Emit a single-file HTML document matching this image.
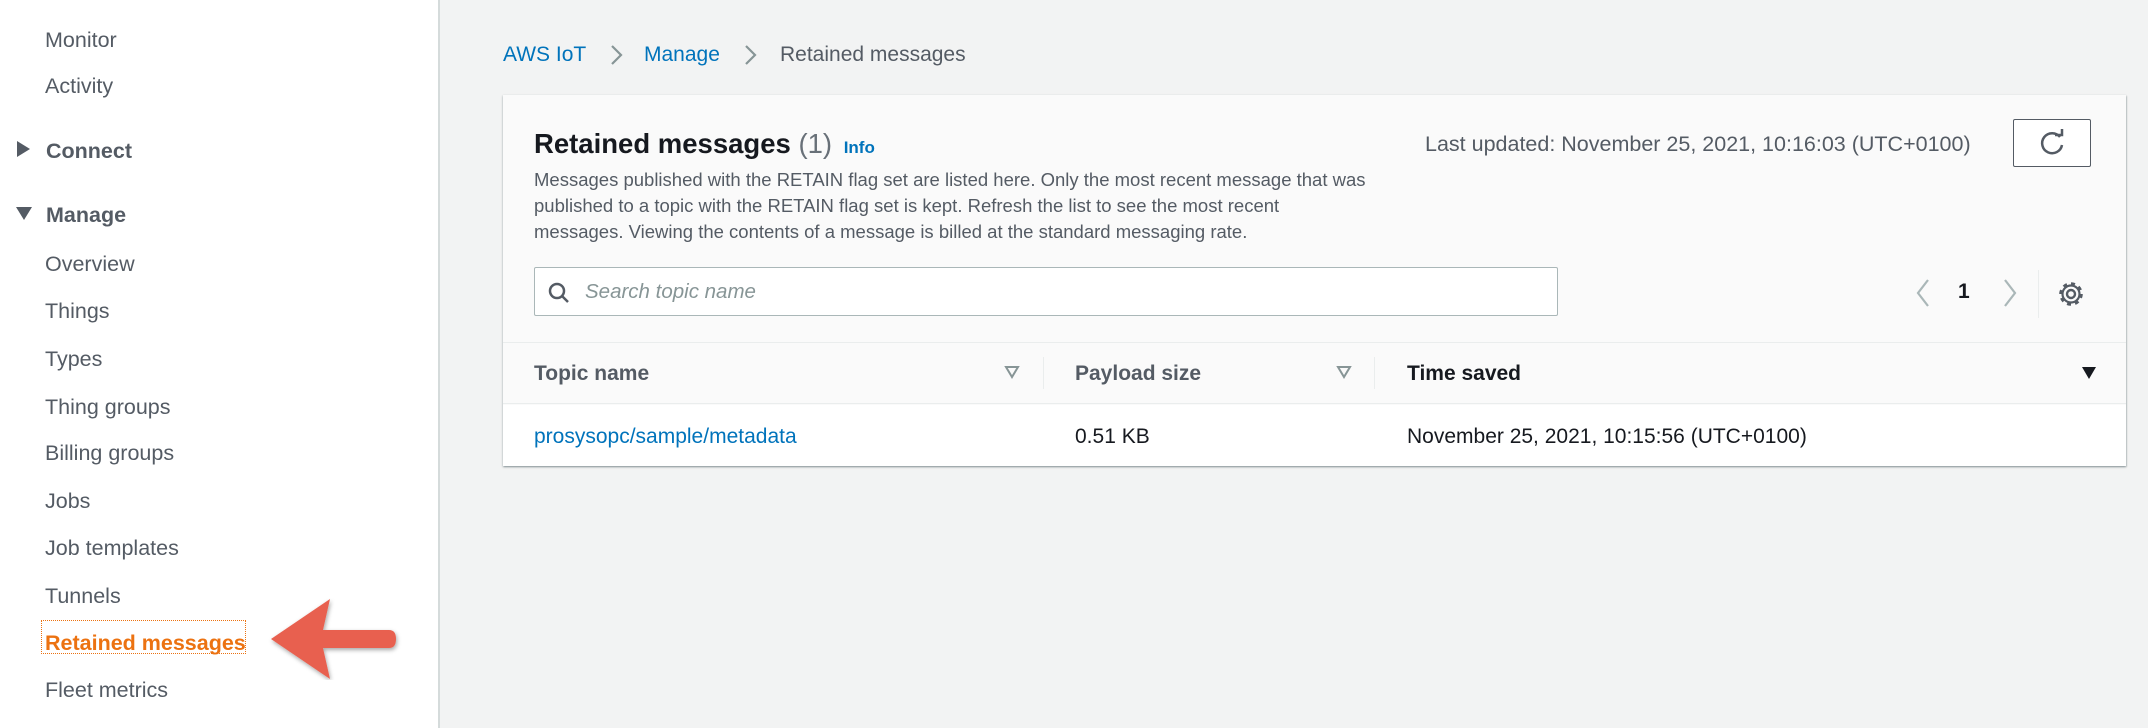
<!DOCTYPE html>
<html><head><meta charset="utf-8"><style>
*{margin:0;padding:0;box-sizing:border-box}
body{width:2148px;height:728px;overflow:hidden;background:#f2f3f3;font-family:"Liberation Sans",sans-serif;position:relative;color:#16191f}
.side{position:absolute;left:0;top:0;width:440px;height:728px;background:#fff;border-right:2px solid #d5dbdb}
.side div{position:absolute;left:45px;font-size:21.5px;color:#545b64;line-height:26px}
.side .h{font-weight:bold;left:46px;color:#545b64}
.tri{position:absolute;left:16px;width:0;height:0}
.a{position:absolute;font-size:21px;line-height:24px}
.card{position:absolute;left:503px;top:95px;width:1623px;height:371px;background:#fafafa;box-shadow:0 1px 2px rgba(0,28,36,.4),1px 1px 1px rgba(0,28,36,.1)}
.blue{color:#0073bb}
</style></head><body>
<div class="side">
<div style="top:27px">Monitor</div>
<div style="top:73px">Activity</div>
<span class="tri" style="top:141px;border-left:13px solid #545b64;border-top:8px solid transparent;border-bottom:8px solid transparent;left:17px"></span>
<div class="h" style="top:138px">Connect</div>
<span class="tri" style="top:207px;border-top:13px solid #545b64;border-left:8px solid transparent;border-right:8px solid transparent"></span>
<div class="h" style="top:202px">Manage</div>
<div style="top:251px">Overview</div>
<div style="top:298px">Things</div>
<div style="top:346px">Types</div>
<div style="top:394px">Thing groups</div>
<div style="top:440px">Billing groups</div>
<div style="top:488px">Jobs</div>
<div style="top:535px">Job templates</div>
<div style="top:583px">Tunnels</div>
<div style="top:620px;left:41px;width:205px;height:34px;border:1px dotted #ec7211"></div>
<div style="top:630px;color:#ec7211;font-weight:bold">Retained messages</div>
<div style="top:677px">Fleet metrics</div>
</div>
<svg style="position:absolute;left:265px;top:598px" width="140" height="82"><defs><filter id="s"><feDropShadow dx="1" dy="2" stdDeviation="2" flood-opacity=".35"/></filter></defs>
<path filter="url(#s)" d="M6 45 L65 5 L58 36 L124 36 Q131 36 131 45 Q131 54 124 54 L58 54 L65 85 Z" fill="#e8604f" transform="translate(0,-4)"/></svg>
<div class="a blue" style="left:503px;top:43px">AWS IoT</div>
<svg style="position:absolute;left:608px;top:43px" width="16" height="24"><path d="M4 3 L13 12 L4 21" fill="none" stroke="#879596" stroke-width="2.2"/></svg>
<div class="a blue" style="left:644px;top:43px">Manage</div>
<svg style="position:absolute;left:742px;top:43px" width="16" height="24"><path d="M4 3 L13 12 L4 21" fill="none" stroke="#879596" stroke-width="2.2"/></svg>
<div class="a" style="left:780px;top:43px;color:#545b64">Retained messages</div>
<div class="card">
<div class="a" style="left:31px;top:33px;font-size:27.5px;line-height:32px;font-weight:bold">Retained messages <span style="font-weight:normal;color:#687078">(1)</span> <span class="blue" style="font-size:17px;margin-left:4px">Info</span></div>
<div class="a" style="left:31px;top:72px;width:900px;font-size:18.5px;line-height:26px;color:#545b64;white-space:nowrap">Messages published with the RETAIN flag set are listed here. Only the most recent message that was<br>published to a topic with the RETAIN flag set is kept. Refresh the list to see the most recent<br>messages. Viewing the contents of a message is billed at the standard messaging rate.</div>
<div class="a" style="left:922px;top:37px;color:#545b64;font-size:21.5px">Last updated: November 25, 2021, 10:16:03 (UTC+0100)</div>
<div style="position:absolute;left:1510px;top:24px;width:78px;height:48px;border:1px solid #545b64;border-radius:2px;background:#fff">
<svg width="78" height="48"><path d="M46 17 A10 10 0 1 0 48 25" fill="none" stroke="#545b64" stroke-width="2.5"/><path d="M41 15 L48 15 L48 9" fill="none" stroke="#545b64" stroke-width="2.5"/></svg></div>
<div style="position:absolute;left:31px;top:172px;width:1024px;height:49px;border:1px solid #aab7b8;border-radius:2px;background:#fff">
<svg style="position:absolute;left:12px;top:13px" width="24" height="24"><circle cx="10" cy="10" r="7" fill="none" stroke="#545b64" stroke-width="2.5"/><path d="M15 15 L21 21" stroke="#545b64" stroke-width="2.5"/></svg>
<div class="a" style="left:50px;top:12px;font-style:italic;color:#879596;font-size:20.5px">Search topic name</div></div>
<svg style="position:absolute;left:1410px;top:182px" width="20" height="32"><path d="M15 3 L5 16 L15 29" fill="none" stroke="#aab7b8" stroke-width="2.2"/></svg>
<div class="a" style="left:1455px;top:185px;font-weight:bold">1</div>
<svg style="position:absolute;left:1497px;top:182px" width="20" height="32"><path d="M5 3 L15 16 L5 29" fill="none" stroke="#aab7b8" stroke-width="2.2"/></svg>
<div style="position:absolute;left:1535px;top:175px;width:1px;height:48px;background:#eaeded"></div>
<svg style="position:absolute;left:1553px;top:184px" width="30" height="30"><circle cx="15" cy="15" r="4" fill="none" stroke="#545b64" stroke-width="2.4"/><circle cx="15" cy="15" r="10.5" fill="none" stroke="#545b64" stroke-width="2.6" stroke-dasharray="4 4.2"/><circle cx="15" cy="15" r="8.5" fill="none" stroke="#545b64" stroke-width="2.2"/></svg>
<div style="position:absolute;left:0;top:247px;width:1623px;height:62px;border-top:1px solid #eaeded;border-bottom:1px solid #eaeded"></div>
<div class="a" style="left:31px;top:267px;font-weight:bold;color:#545b64">Topic name</div>
<svg style="position:absolute;left:501px;top:270px" width="16" height="14"><path d="M2 2 L14 2 L8 12 Z" fill="none" stroke="#879596" stroke-width="2"/></svg>
<div style="position:absolute;left:540px;top:262px;width:1px;height:32px;background:#eaeded"></div>
<div class="a" style="left:572px;top:267px;font-weight:bold;color:#545b64">Payload size</div>
<svg style="position:absolute;left:833px;top:270px" width="16" height="14"><path d="M2 2 L14 2 L8 12 Z" fill="none" stroke="#879596" stroke-width="2"/></svg>
<div style="position:absolute;left:871px;top:262px;width:1px;height:32px;background:#eaeded"></div>
<div class="a" style="left:904px;top:267px;font-weight:bold">Time saved</div>
<svg style="position:absolute;left:1578px;top:271px" width="16" height="14"><path d="M1 1 L15 1 L8 13 Z" fill="#16191f"/></svg>
<div style="position:absolute;left:0;top:310px;width:1623px;height:61px;background:#fff"></div>
<div class="a blue" style="left:31px;top:330px">prosysopc/sample/metadata</div>
<div class="a" style="left:572px;top:330px">0.51 KB</div>
<div class="a" style="left:904px;top:330px">November 25, 2021, 10:15:56 (UTC+0100)</div>
</div>
</body></html>
